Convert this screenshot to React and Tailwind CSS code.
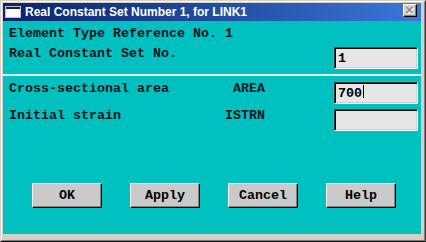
export default function App() {
  const inputCls =
    "w-[84px] h-[22px] bg-[#e6e6e6] border border-t-[#404040] border-l-[#404040] border-r-white border-b-white shadow-[inset_1px_1px_0_#000,inset_-1px_-1px_0_#d4d0c8] pl-[3px] pt-[3px] leading-[15px]";
  const btnCls =
    "w-[70px] h-[25px] bg-[#cacaca] border border-t-white border-l-white border-r-black border-b-black shadow-[inset_-1px_-1px_0_#808080] flex items-center justify-center leading-[15px]";
  return (
    <div className="w-[426px] h-[242px] bg-[#d4d0c8] border border-t-[#d4d0c8] border-l-[#d4d0c8] border-r-[#404040] border-b-[#101010] flex flex-col overflow-hidden">
      <div className="flex-1 flex flex-col border border-t-white border-l-white border-r-[#808080] border-b-[#808080] pt-[1px] pl-[1px] pr-[3px] pb-[6px]">
        {/* Title bar */}
        <div className="h-[18px] flex items-start bg-linear-to-r from-[#0a246a] to-[#3a78d8] text-white">
          <svg width="16" height="12" viewBox="0 0 16 12" className="ml-[2px] mt-[3px] shrink-0">
            <rect x="0" y="0" width="16" height="12" fill="#ffffff" />
            <rect x="0.5" y="0.5" width="15" height="11" fill="none" stroke="#c0c0c0" />
            <rect x="1" y="1" width="14" height="2" fill="#0a246a" />
          </svg>
          <span className="ml-[4px] mt-[2px] font-['Liberation_Sans',Arial,sans-serif] font-bold text-[12px] leading-[14px] whitespace-nowrap">
            Real Constant Set Number 1, for LINK1
          </span>
          <div className="ml-auto mr-[4px] mt-[1px] w-[14px] h-[13px] bg-[#d4d0c8] border border-t-white border-l-white border-r-black border-b-black shadow-[inset_-1px_-1px_0_#808080] flex items-center justify-center">
            <svg width="8" height="7" viewBox="0 0 8 7">
              <path d="M1 1 L7 7 M7 1 L1 7" stroke="#ffffff" strokeWidth="1.5" transform="translate(0.6,0.3)" />
              <path d="M0.5 0 L6.5 6 M6.5 0 L0.5 6" stroke="#8a8a8a" strokeWidth="1.5" />
            </svg>
          </div>
        </div>
        {/* Body */}
        <div className="flex-1 bg-[#00c0c0] flex flex-col font-['Liberation_Mono','Courier_New',monospace] font-bold text-[13.33px] leading-[15px] text-[#0a1420]">
          <div className="pl-[6px] pt-[5px] whitespace-pre">Element Type Reference No. 1</div>
          <div className="mt-[5px] flex items-start pl-[6px] pr-[3px]">
            <span className="whitespace-pre">Real Constant Set No.</span>
            <div className={"ml-auto mt-[1px] " + inputCls + " text-black"}>1</div>
          </div>
          <div className="mt-[5px] h-[2px] bg-[#e8f4f4]" />
          <div className="mt-[5px] flex items-start pl-[6px] pr-[3px]">
            <div className="w-[256px] flex justify-between">
              <span className="whitespace-pre">Cross-sectional area</span>
              <span>AREA</span>
            </div>
            <div className={"ml-auto mt-[1px] " + inputCls + " text-black flex items-start"}>
              <span>700</span>
              <span className="w-[1px] h-[13px] bg-black ml-[1px] mt-[-1px]" />
            </div>
          </div>
          <div className="mt-[4px] flex items-start pl-[6px] pr-[3px]">
            <div className="w-[256px] flex justify-between">
              <span className="whitespace-pre">Initial strain</span>
              <span>ISTRN</span>
            </div>
            <div className={"ml-auto mt-[1px] " + inputCls} />
          </div>
          <div className="mt-[52px] flex pl-[29px] gap-[28px] text-black">
            <div className={btnCls}>OK</div>
            <div className={btnCls}>Apply</div>
            <div className={btnCls}>Cancel</div>
            <div className={btnCls}>Help</div>
          </div>
        </div>
      </div>
    </div>
  );
}
